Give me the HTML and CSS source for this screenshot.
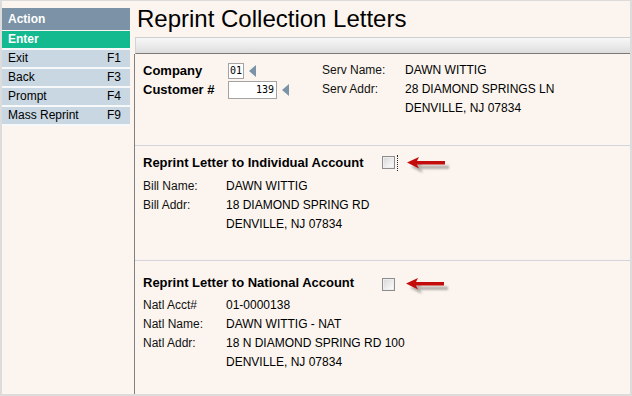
FILE: index.html
```html
<!DOCTYPE html>
<html>
<head>
<meta charset="utf-8">
<title>Reprint Collection Letters</title>
<link rel="stylesheet" href="styles.css">
</head>
<body>
<div class="frame">
  <aside class="side">
    <div class="side-head">Action</div>
    <ul class="menu">
      <li class="active"><span>Enter</span></li>
      <li><span>Exit</span><span class="key">F1</span></li>
      <li><span>Back</span><span class="key">F3</span></li>
      <li><span>Prompt</span><span class="key">F4</span></li>
      <li><span>Mass Reprint</span><span class="key">F9</span></li>
    </ul>
  </aside>
  <main class="main">
    <h1 class="title">Reprint Collection Letters</h1>
    <div class="toolbar"></div>
    <div class="content">
      <section class="sec sec-top">
        <div class="keys">
          <div class="krow">
            <span class="klabel">Company</span>
            <span class="inp inp-sm">01</span>
            <span class="tri"></span>
          </div>
          <div class="krow">
            <span class="klabel">Customer #</span>
            <span class="inp inp-lg">139</span>
            <span class="tri"></span>
          </div>
        </div>
        <div class="info info-serv">
          <span class="lbl">Serv Name:</span><span class="val">DAWN WITTIG</span>
          <span class="lbl">Serv Addr:</span><span class="val">28 DIAMOND SPRINGS LN</span>
          <span class="lbl"></span><span class="val">DENVILLE, NJ 07834</span>
        </div>
      </section>
      <section class="sec sec-ind">
        <div class="shead">
          <span class="stitle">Reprint Letter to Individual Account</span>
          <span class="cb"></span>
          <span class="focus"></span>
          <svg class="arrow" width="46" height="20" viewBox="0 0 46 20">
            <path class="arrow-shadow" d="M3 9 L15 3.5 L13 7.5 L41 7.5 L41 11 L13 11 L15 15 Z" transform="translate(2 3)"/>
            <path class="arrow-body" d="M1 7.5 L13 2 L11 6 L39 6 L39 9.5 L11 9.5 L13 13.5 Z"/>
          </svg>
        </div>
        <div class="info">
          <span class="lbl">Bill Name:</span><span class="val">DAWN WITTIG</span>
          <span class="lbl">Bill Addr:</span><span class="val">18 DIAMOND SPRING RD</span>
          <span class="lbl"></span><span class="val">DENVILLE, NJ 07834</span>
        </div>
      </section>
      <section class="sec sec-nat">
        <div class="shead">
          <span class="stitle">Reprint Letter to National Account</span>
          <span class="cb"></span>
          <svg class="arrow arrow-nat" width="46" height="20" viewBox="0 0 46 20">
            <path class="arrow-shadow" d="M3 9 L15 3.5 L13 7.5 L41 7.5 L41 11 L13 11 L15 15 Z" transform="translate(2 3)"/>
            <path class="arrow-body" d="M1 7.5 L13 2 L11 6 L39 6 L39 9.5 L11 9.5 L13 13.5 Z"/>
          </svg>
        </div>
        <div class="info">
          <span class="lbl">Natl Acct#</span><span class="val">01-0000138</span>
          <span class="lbl">Natl Name:</span><span class="val">DAWN WITTIG - NAT</span>
          <span class="lbl">Natl Addr:</span><span class="val">18 N DIAMOND SPRING RD 100</span>
          <span class="lbl"></span><span class="val">DENVILLE, NJ 07834</span>
        </div>
      </section>
    </div>
  </main>
</div>
</body>
</html>
```
FILE: styles.css
```css
* { box-sizing: border-box; }
html, body { margin: 0; padding: 0; }
body {
  width: 632px;
  height: 396px;
  background: #fcf5ef;
  font-family: "Liberation Sans", Arial, sans-serif;
  font-size: 12px;
  color: #111;
  overflow: hidden;
}
.frame {
  width: 632px;
  height: 396px;
  border: 2px solid #dcdcdc;
  border-top: 1px solid #dcdcdc;
  display: grid;
  grid-template-columns: 128px 1fr;
  column-gap: 4px;
}
.side { padding-top: 7px; }
.side-head {
  height: 22px;
  line-height: 22px;
  background: #7b92a7;
  color: #fff;
  font-weight: bold;
  padding-left: 6px;
  margin-bottom: 1px;
}
.menu { list-style: none; margin: 0; padding: 0; }
.menu li {
  height: 19px;
  line-height: 17px;
  background: #c9d7e3;
  border-bottom: 2px solid #f7f8fa;
  display: flex;
  justify-content: space-between;
  padding: 0 9px 0 6px;
  color: #000;
}
.menu li.active {
  background: #13b98f;
  color: #fff;
  font-weight: bold;
}
.main {
  display: flex;
  flex-direction: column;
  min-width: 0;
}
.title {
  margin: 0;
  height: 36px;
  line-height: 36px;
  padding-left: 3px;
  font-size: 24px;
  font-weight: normal;
  color: #000;
  white-space: nowrap;
}
.toolbar {
  height: 17px;
  margin-left: 1px;
  border-top: 1px solid #cfcfcf;
  border-left: 1px solid #d4d4d4;
  border-bottom: 1px solid #7a7a7a;
  background: linear-gradient(#f7f7f7, #e9e9e9 60%, #dcdcdc);
}
.content {
  flex: 1;
  border-left: 1px solid #808080;
}
.sec {
  border-bottom: 1px solid #d2d5dc;
  padding-left: 8px;
}
.sec-top {
  height: 92px;
  padding-top: 7px;
  display: flex;
}
.keys { width: 179px; }
.krow {
  height: 19px;
  display: flex;
  align-items: center;
}
.klabel {
  width: 85px;
  font-size: 13px;
  font-weight: bold;
  color: #000;
}
.inp {
  background: #fff;
  border: 1px solid #a3a3a3;
  font-family: "DejaVu Sans Mono", monospace;
  font-size: 10px;
  color: #000;
  text-align: right;
  padding: 0 2px;
}
.inp-sm { width: 16px; height: 16px; line-height: 14px; padding: 0 1px; text-align: left; }
.inp-lg { width: 49px; height: 18px; line-height: 16px; }
.tri {
  width: 0;
  height: 0;
  margin-left: 5px;
  border-top: 6px solid transparent;
  border-bottom: 6px solid transparent;
  border-right: 7px solid #7b93a8;
}
.info {
  display: grid;
  grid-template-columns: 83px auto;
  grid-auto-rows: 19px;
  line-height: 19px;
  color: #111;
}
.info .val { color: #000; }
.sec-ind { height: 115px; padding-top: 7px; }
.sec-nat { border-bottom: 0; padding-top: 12px; }
.shead {
  height: 19px;
  display: flex;
  align-items: center;
  margin-bottom: 5px;
}
.sec-nat .shead { margin-bottom: 4px; }
.stitle {
  width: 239px;
  font-size: 13px;
  font-weight: bold;
  color: #000;
  white-space: nowrap;
}
.cb {
  width: 13px;
  height: 13px;
  border: 1px solid #8c8d8e;
  background: linear-gradient(135deg, #d6d6d6, #f3f3f3 70%, #fdfdfd);
  box-shadow: inset 0 0 0 1px #eeeeee;
}
.sec-nat .cb { margin-top: 3px; }
.focus {
  width: 1px;
  height: 16px;
  margin-left: 2px;
  border-left: 1px dotted #222;
}
.arrow { margin-left: 8px; margin-top: 4px; }
.arrow-nat { margin-left: 10px; margin-top: 6px; }
.arrow-shadow { fill: #000; opacity: 0.28; filter: blur(1.2px); }
.arrow-body { fill: #c30d0d; }
```
